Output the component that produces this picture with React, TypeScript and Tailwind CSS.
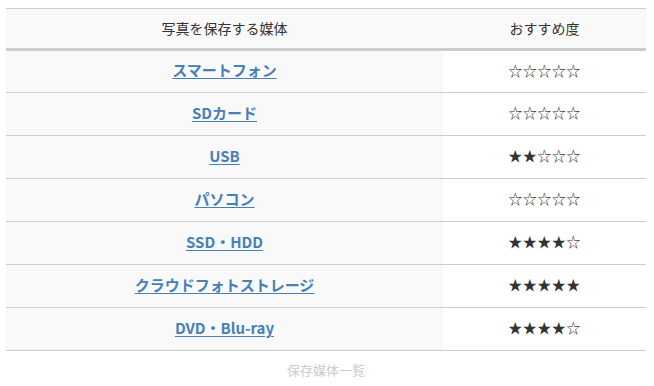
const rows = [
  { name: "スマートフォン", stars: 0 },
  { name: "SDカード", stars: 0 },
  { name: "USB", stars: 2 },
  { name: "パソコン", stars: 0 },
  { name: "SSD・HDD", stars: 4 },
  { name: "クラウドフォトストレージ", stars: 5 },
  { name: "DVD・Blu-ray", stars: 4 },
];

const Stars = ({ count }: { count: number }) => (
  <span>{"★".repeat(count) + "☆".repeat(5 - count)}</span>
);

export default function App() {
  return (
    <div
      className="w-[654px] h-[386px] bg-white px-[6px] pt-[8px] text-[#333]"
      style={{ fontFamily: '"Noto Sans CJK JP", "Liberation Sans", sans-serif' }}
    >
      <table className="w-[640px] border-collapse table-fixed">
        <caption className="caption-bottom pt-[9px] text-[13px] leading-[20px] text-[#cccccc]">
          保存媒体一覧
        </caption>
        <colgroup>
          <col className="w-[437px]" />
          <col className="w-[203px]" />
        </colgroup>
        <thead>
          <tr className="border-t border-[#cccccc] border-b-[3px] border-b-[#cccccc] bg-[#f9f9f9]">
            <th className="h-[41px] p-0 pb-[1px] text-[14px] font-normal text-center align-middle">
              写真を保存する媒体
            </th>
            <th className="h-[41px] p-0 pb-[1px] text-[14px] font-normal text-center align-middle">
              おすすめ度
            </th>
          </tr>
        </thead>
        <tbody>
          {rows.map((r) => (
            <tr key={r.name} className="border-b border-[#cccccc]">
              <td className="h-[43px] p-0 pb-[4px] bg-[#f9f9f9] text-center align-middle">
                <a
                  href="#"
                  className="text-[15px] font-bold text-[#4680b8] underline underline-offset-2"
                >
                  {r.name}
                </a>
              </td>
              <td className="h-[43px] p-0 pb-[3px] text-center align-middle text-[14px] text-[#333] tracking-[0.5px]">
                <Stars count={r.stars} />
              </td>
            </tr>
          ))}
        </tbody>
      </table>
    </div>
  );
}
